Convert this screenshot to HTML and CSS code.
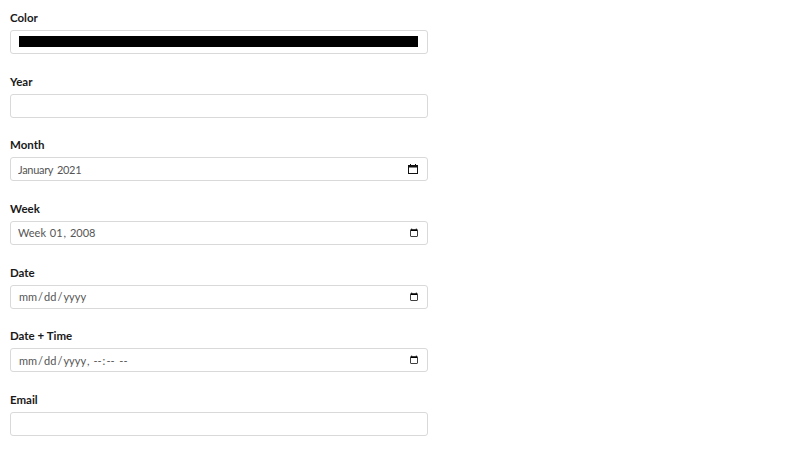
FILE: index.html
```html
<!DOCTYPE html>
<html lang="en">
<head>
<meta charset="utf-8">
<link rel="stylesheet" href="styles.css">
</head>
<body>
<form class="form">
  <div class="field">
    <label class="label" for="color">Color</label>
    <input class="input input-color" id="color" type="color" value="#000000">
  </div>
  <div class="field">
    <label class="label" for="year">Year</label>
    <input class="input" id="year" type="number">
  </div>
  <div class="field">
    <label class="label" for="month">Month</label>
    <div class="input input-box">
      <input class="inner" id="month" type="text" value="January 2021" readonly>
      <svg class="cal" width="10" height="10" viewBox="0 0 10 10" aria-hidden="true">
        <rect x="0.5" y="1.5" width="9" height="8" fill="none" stroke="#111" stroke-width="1"/>
        <rect x="0.5" y="1.5" width="9" height="2" fill="#111"/>
        <rect x="2" y="0" width="1" height="2" fill="#111"/>
        <rect x="7" y="0" width="1" height="2" fill="#111"/>
      </svg>
    </div>
  </div>
  <div class="field">
    <label class="label" for="week">Week</label>
    <input class="input" id="week" type="week" value="2008-W01">
  </div>
  <div class="field">
    <label class="label" for="date">Date</label>
    <input class="input" id="date" type="date">
  </div>
  <div class="field">
    <label class="label" for="dt">Date + Time</label>
    <input class="input" id="dt" type="datetime-local">
  </div>
  <div class="field">
    <label class="label" for="email">Email</label>
    <input class="input" id="email" type="email">
  </div>
</form>
</body>
</html>
```
FILE: styles.css
```css
html, body {
  margin: 0;
  padding: 0;
  background: #fff;
}
body {
  font-family: Lato, "Noto Sans", sans-serif;
  color: #222;
}
.form {
  padding: 9px 10px;
  width: 418px;
}
.field {
  display: flex;
  flex-direction: column;
  margin-bottom: 18.67px;
}
.label {
  font-size: 11.5px;
  font-weight: 700;
  line-height: 16px;
  margin-top: 1px;
  margin-bottom: 4px;
  color: #1a1a1a;
}
.input {
  box-sizing: border-box;
  width: 418px;
  height: 24px;
  margin: 0;
  padding: 0 7px;
  border: 1px solid #d9d9d9;
  border-radius: 3px;
  background: #fff;
  font-family: Lato, "Noto Sans", sans-serif;
  font-size: 11px;
  color: #555;
  outline: none;
}
.input-box {
  display: flex;
  align-items: center;
  justify-content: space-between;
  padding: 0 9px 0 7px;
}
.inner {
  flex: 1;
  min-width: 0;
  border: none;
  padding: 0;
  margin: 0;
  background: transparent;
  font: inherit;
  color: inherit;
  outline: none;
  letter-spacing: -0.3px;
  word-spacing: 1.5px;
}
.cal {
  display: block;
  flex: none;
}
.input-color {
  padding: 0;
  cursor: pointer;
  -webkit-appearance: none;
  appearance: none;
}
.input-color::-webkit-color-swatch-wrapper {
  padding: 5px 9px 6px 8px;
}
.input-color::-webkit-color-swatch {
  border: none;
  border-radius: 0;
}
.input::-webkit-calendar-picker-indicator {
  width: 10px;
  height: 10px;
  margin-right: -1px;
}
```
